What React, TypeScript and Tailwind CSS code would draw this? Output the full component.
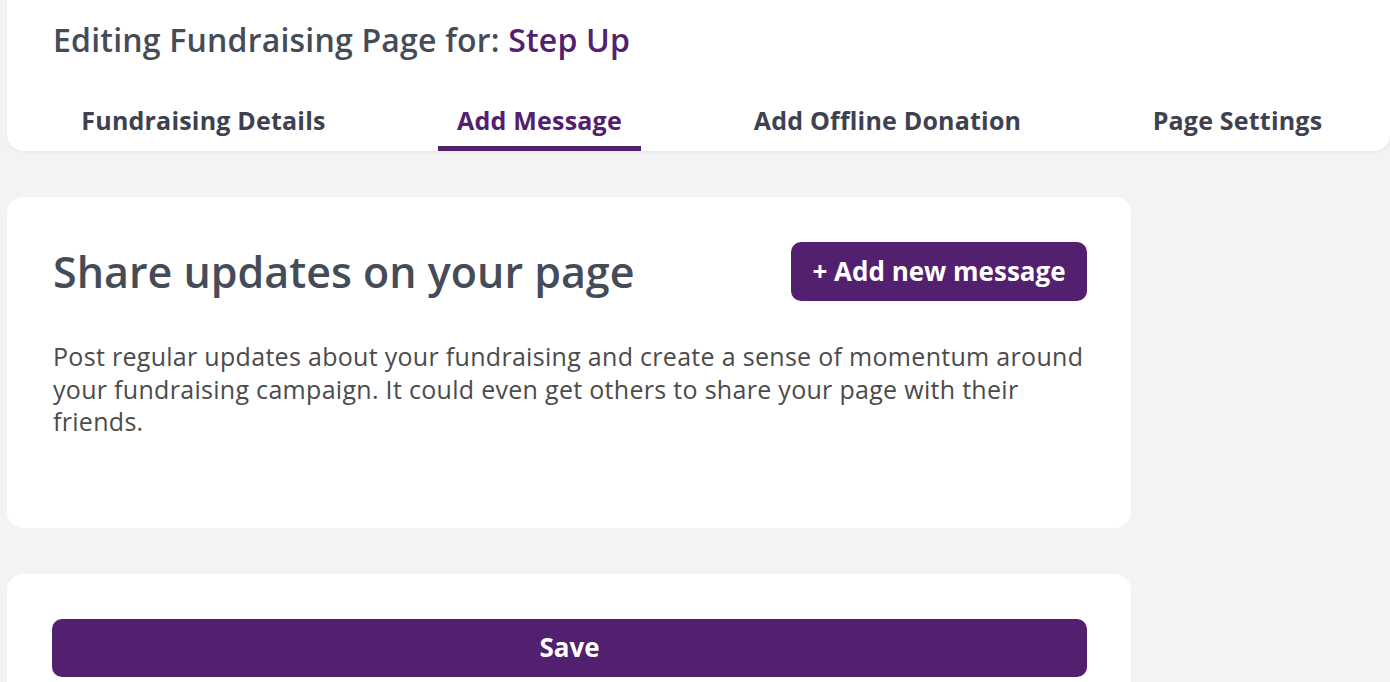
import React from 'react'

const tabs = [
  { label: 'Fundraising Details', width: 'w-[277px]', active: false },
  { label: 'Add Message', width: 'w-[203px]', active: true },
  { label: 'Add Offline Donation', width: 'w-[301px]', active: false },
  { label: 'Page Settings', width: 'w-[207px]', active: false },
]

export default function App() {
  return (
    <div className="min-h-screen bg-[#f3f3f3] font-['Open_Sans','Noto_Sans',sans-serif] overflow-hidden">
      {/* header with tabs */}
      <div className="ml-[7px] bg-white rounded-b-[16px] shadow-[0_1px_3px_rgba(0,0,0,0.06)] pt-[20px]">
        <h1 className="pl-[46px] text-[32px] leading-[40px] tracking-[0.2px] font-semibold text-[#454b57]">
          Editing Fundraising Page for: <span className="text-[#52206e]">Step Up</span>
        </h1>
        <nav className="flex gap-[96px] pl-[58px]">
          {tabs.map((t) => (
            <button
              key={t.label}
              className={`${t.width} pt-[44px] pb-[10px] border-b-[5px] text-[25px] leading-[32px] tracking-[0.2px] font-bold text-center ${
                t.active ? 'border-[#52206e] text-[#52206e]' : 'border-transparent text-[#3e4150]'
              }`}
            >
              {t.label}
            </button>
          ))}
        </nav>
      </div>

      <div className="ml-[7px] w-[1124px] mt-[46px] flex flex-col gap-[46px]">
        <div className="bg-white rounded-[16px] pt-[45px] pl-[46px] pr-[42px] pb-[90px]">
          <div className="flex items-center justify-between pr-[2px]">
            <h2 className="text-[43px] leading-[52px] font-semibold text-[#454b57]">
              Share updates on your page
            </h2>
            <button className="h-[59px] w-[296px] rounded-[10px] bg-[#52206e] text-white text-[26px] font-bold">
              + Add new message
            </button>
          </div>
          <p className="mt-[39px] text-[25px] leading-[32.5px] tracking-[0.3px] text-[#4b4b4b]">
            Post regular updates about your fundraising and create a sense of momentum around
            your fundraising campaign. It could even get others to share your page with their
            friends.
          </p>
        </div>

        <div className="bg-white rounded-t-[16px] pt-[45px] pl-[45px] pr-[44px] pb-[5px]">
          <button className="w-full h-[58px] rounded-[10px] bg-[#52206e] text-white text-[26px] font-bold">
            Save
          </button>
        </div>
      </div>
    </div>
  )
}
